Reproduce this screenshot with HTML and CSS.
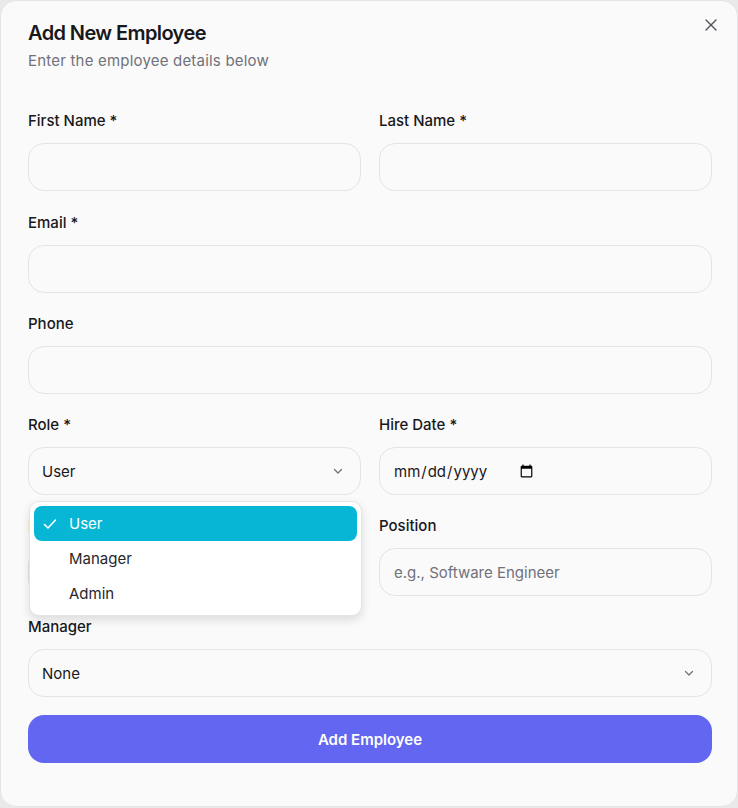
FILE: index.html
```html
<!DOCTYPE html>
<html lang="en">
<head>
<meta charset="utf-8">
<title>Add New Employee</title>
<link rel="stylesheet" href="styles.css">
</head>
<body>
<div class="dialog">
  <button class="close" aria-label="Close">
    <svg width="12" height="12" viewBox="0 0 12 12"><path d="M1 1L11 11M11 1L1 11" stroke="#52525b" stroke-width="1.4" stroke-linecap="round"/></svg>
  </button>
  <div class="header">
    <h2 class="title">Add New Employee</h2>
    <p class="subtitle">Enter the employee details below</p>
  </div>
  <form class="form">
    <div class="row two first">
      <div class="field">
        <label class="label">First Name *</label>
        <input class="input" type="text">
      </div>
      <div class="field">
        <label class="label">Last Name *</label>
        <input class="input" type="text">
      </div>
    </div>
    <div class="field">
      <label class="label">Email *</label>
      <input class="input" type="email">
    </div>
    <div class="field">
      <label class="label">Phone</label>
      <input class="input" type="tel">
    </div>
    <div class="row two">
      <div class="field role">
        <label class="label">Role *</label>
        <div class="select">
          <span>User</span>
          <svg class="chev" width="12" height="12" viewBox="0 0 12 12"><path d="M2.5 4.5L6 8L9.5 4.5" fill="none" stroke="#71717a" stroke-width="1.3" stroke-linecap="round" stroke-linejoin="round"/></svg>
        </div>
        <div class="menu">
          <div class="item active">
            <svg class="check" width="14" height="14" viewBox="0 0 14 14"><path d="M1.5 7.5L5 11L12.5 3" fill="none" stroke="#ffffff" stroke-width="1.6" stroke-linecap="round" stroke-linejoin="round"/></svg>
            <span>User</span>
          </div>
          <div class="item"><span>Manager</span></div>
          <div class="item"><span>Admin</span></div>
        </div>
      </div>
      <div class="field">
        <label class="label">Hire Date *</label>
        <div class="date-box">
          <input class="date" type="date">
        </div>
      </div>
    </div>
    <div class="row two">
      <div class="field">
        <label class="label">Department</label>
        <div class="select"><span>None</span></div>
      </div>
      <div class="field">
        <label class="label">Position</label>
        <input class="input" type="text" placeholder="e.g., Software Engineer">
      </div>
    </div>
    <div class="field">
      <label class="label">Manager</label>
      <div class="select">
        <span>None</span>
        <svg class="chev" width="12" height="12" viewBox="0 0 12 12"><path d="M2.5 4.5L6 8L9.5 4.5" fill="none" stroke="#71717a" stroke-width="1.3" stroke-linecap="round" stroke-linejoin="round"/></svg>
      </div>
    </div>
    <button class="submit" type="button">Add Employee</button>
  </form>
</div>
</body>
</html>
```
FILE: styles.css
```css
* { box-sizing: border-box; }
html, body {
  margin: 0;
  padding: 0;
  background: #e9e9ea;
  font-family: Inter, "Noto Sans", sans-serif;
  color: #18181b;
}
.dialog {
  position: relative;
  width: 738px;
  height: 807px;
  background: #fafafa;
  border: 1px solid #e4e4e7;
  border-radius: 16px;
  padding: 18px 25px 0 27px;
}
.close {
  position: absolute;
  top: 17px;
  right: 19px;
  width: 14px;
  height: 14px;
  padding: 0;
  border: none;
  background: transparent;
  display: flex;
  align-items: center;
  justify-content: center;
}
.header { display: flex; flex-direction: column; gap: 3px; }
.title {
  margin: 0;
  font-size: 20px;
  line-height: 28px;
  font-weight: 600;
  letter-spacing: -0.6px;
}
.subtitle {
  margin: 0;
  font-size: 15px;
  line-height: 22px;
  color: #71717a;
  letter-spacing: 0.2px;
}
.form {
  margin-top: 38px;
  display: flex;
  flex-direction: column;
  gap: 20px;
}
.row.two {
  display: grid;
  grid-template-columns: 1fr 1fr;
  gap: 18px;
}
.row.first { padding-bottom: 1px; }
.field {
  display: flex;
  flex-direction: column;
  gap: 12px;
  position: relative;
}
.label {
  font-size: 15px;
  line-height: 21px;
  font-weight: 450;
  color: #18181b;
}
.input, .select, .date-box {
  height: 48px;
  width: 100%;
  border: 1px solid #e4e4e7;
  border-radius: 16px;
  background: #fafafa;
  padding: 0 14px;
  font-family: Inter, "Noto Sans", sans-serif;
  font-size: 15px;
  color: #18181b;
  outline: none;
}
.input::placeholder { color: #71717a; }
.date-box {
  display: flex;
  align-items: center;
}
.date {
  border: none;
  background: transparent;
  padding: 0;
  margin: 0 0 0 -1px;
  font-family: Inter, "Noto Sans", sans-serif;
  font-size: 15px;
  color: #18181b;
  outline: none;
}
.date::-webkit-calendar-picker-indicator { margin-left: 8px; }
.select {
  display: flex;
  align-items: center;
  justify-content: space-between;
  padding: 0 14px 0 13px;
}
.chev { margin-right: 2px; }
.menu {
  position: absolute;
  top: 87px;
  left: 1px;
  width: 333px;
  background: #ffffff;
  border: 1px solid #e4e4e7;
  border-radius: 10px;
  box-shadow: 0 4px 10px rgba(0, 0, 0, 0.12);
  padding: 4px;
  z-index: 5;
}
.item {
  height: 35px;
  display: flex;
  align-items: center;
  padding-left: 35px;
  position: relative;
  font-size: 15px;
  color: #27272a;
  border-radius: 8px;
}
.item.active {
  background: #06b6d4;
  color: #ffffff;
}
.check {
  position: absolute;
  left: 9px;
  top: 11px;
}
.submit {
  margin-top: -2px;
  height: 48px;
  border: none;
  border-radius: 16px;
  background: #6366f1;
  color: #ffffff;
  font-family: Inter, "Noto Sans", sans-serif;
  font-size: 15px;
  font-weight: 600;
}
```
